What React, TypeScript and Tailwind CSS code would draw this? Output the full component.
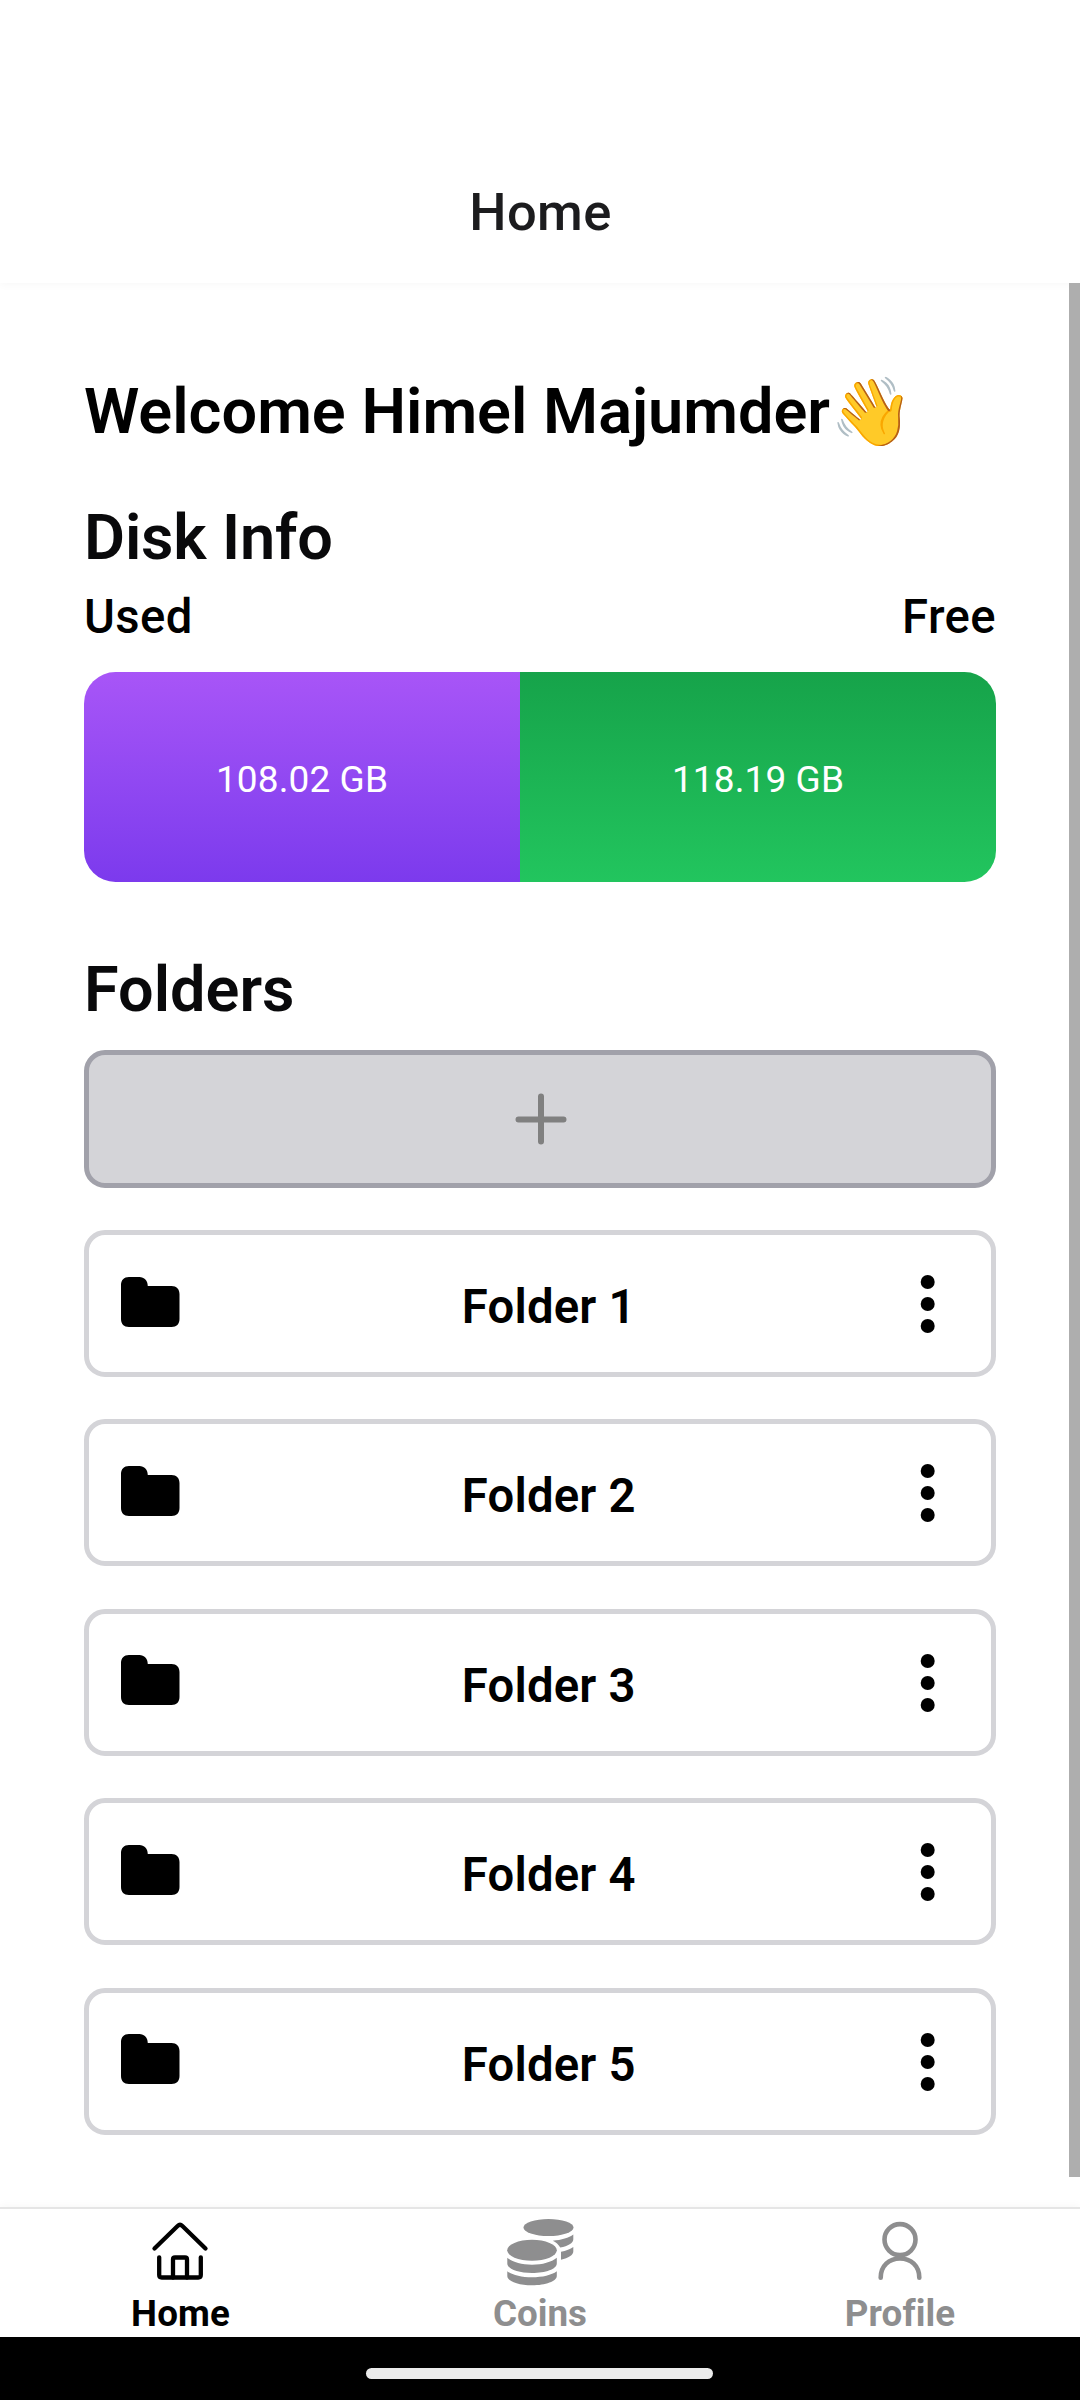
const folders = ["Folder 1", "Folder 2", "Folder 3", "Folder 4", "Folder 5"];

function FolderIcon() {
  return (
    <svg width="58.500" height="50" viewBox="0 0 59 50" preserveAspectRatio="none">
      <path d="M8 0H18.500C23.500 0 27 3.500 27 9H51C56 9 59 12 59 17V42C59 47 56 50 51 50H8C3 50 0 47 0 42V8C0 3 3 0 8 0Z" />
    </svg>
  );
}

function DotsIcon() {
  return (
    <svg width="16" height="60" viewBox="0 0 16 60">
      <circle cx="8.700" cy="8" r="7" />
      <circle cx="8.700" cy="30" r="7" />
      <circle cx="8.700" cy="52" r="7" />
    </svg>
  );
}

function HomeIcon() {
  return (
    <svg width="62" height="62" viewBox="0 0 62 62" fill="none" stroke="currentColor" strokeWidth="4.300" strokeLinecap="round" strokeLinejoin="round">
      <path d="M5.500 30.500L28.600 8Q31 5.700 33.400 8L56.500 30.500" />
      <path d="M10.200 39.300V57Q10.200 59.500 12.700 59.500H49.300Q51.800 59.500 51.800 57V39.300" />
      <path d="M24 59.500V41.500Q24 39.500 26 39.500H36Q38 39.500 38 41.500V59.500" />
    </svg>
  );
}

function CoinsIcon() {
  return (
    <svg width="67" height="67" viewBox="0 0 67 67" fill="currentColor">
      <ellipse cx="41.500" cy="8.600" rx="25" ry="8.500" />
      <path d="M66.300 15.500V20.200C66.300 24 61 27 53.300 28.600C51.500 25.300 49 23.200 45.800 21.700C54.500 21 62 18.800 66.300 15.500Z" />
      <path d="M66.300 28V32.500C66.300 36.200 61.500 39 54 40.700V32.800C59 31.800 63.500 30 66.300 28Z" />
      <ellipse cx="25" cy="31.300" rx="24.800" ry="10.500" />
      <path d="M.3 38.800C5.500 43.200 14.500 45.700 25 45.700S44.500 43.200 49.800 38.800V44.500C49.800 50 38.700 54 25 54S.3 50 .3 44.500Z" />
      <path d="M.3 52.300C5.500 56.200 14.500 58.300 25 58.300S44.500 56.200 49.800 52.300V57C49.800 62.200 38.700 66.300 25 66.300S.3 62.200 .3 57Z" />
    </svg>
  );
}

function ProfileIcon() {
  return (
    <svg width="50" height="64" viewBox="0 0 50 64" fill="none" stroke="currentColor" strokeWidth="4.600" strokeLinecap="round">
      <circle cx="25" cy="21.600" r="15.500" />
      <path d="M5.700 59.700C5.700 48 14 40.500 25 40.500S44.300 48 44.300 59.700" />
    </svg>
  );
}

export default function App() {
  return (
    <div className="flex h-[2400px] w-[1080px] flex-col overflow-hidden bg-white font-['Roboto',sans-serif] text-black">
      <header className="flex h-[283px] shrink-0 justify-center pt-[181px] pl-px text-[52.5px] leading-[62px] font-medium tracking-[0.4px] text-[#1c1c1e] shadow-[0_2px_8px_#00000008]">
        Home
      </header>

      <div className="flex h-[1894px] shrink-0">
        <main className="ml-[84px] flex w-[912px] flex-col">
          <h1 className="mt-[87px] h-[84px] whitespace-nowrap text-[63px] leading-[84px] font-semibold">
            Welcome Himel Majumder<span className="inline-block translate-y-[2px] text-[67px] leading-none">👋</span>
          </h1>
          <h2 className="mt-[42px] h-[84px] text-[63px] leading-[84px] font-semibold tracking-[-0.15px] text-[#09090b]">Disk Info</h2>
          <div className="flex h-[74px] justify-between text-[47.25px] leading-[74px] font-medium tracking-[0.4px]">
            <span>Used</span>
            <span>Free</span>
          </div>
          <section className="mt-[18px] flex h-[210px] overflow-hidden rounded-[31.5px] text-[37px] leading-[52px] tracking-[0.1px] text-white">
            <div className="flex w-[436px] items-center justify-center bg-linear-to-b from-[#a855f7] to-[#7c3aed] pt-[5px]">108.02 GB</div>
            <div className="flex flex-1 items-center justify-center bg-linear-to-b from-[#16a34a] to-[#22c55e] pt-[5px]">118.19 GB</div>
          </section>
          <h2 className="mt-[66px] h-[84px] text-[63px] leading-[84px] font-semibold text-[#09090b]">Folders</h2>
          <button className="mt-[18px] flex h-[138px] shrink-0 items-center justify-center rounded-[21px] border-[5px] border-[#a1a1aa] bg-[#d4d4d8] pl-px">
            <svg width="52" height="52" viewBox="0 0 52 52" stroke="#808080" strokeWidth="6" strokeLinecap="round">
              <path d="M26 3.500V48.500M3.500 26.400H48.500" />
            </svg>
          </button>
          <div className="mt-[42px] flex flex-col gap-[42.4px]">
            {folders.map((name) => (
              <div key={name} className="flex h-[147px] items-center justify-between rounded-[21px] border-[5px] border-[#d4d4d8] pr-[56px] pl-[32px]">
                <div className="-mt-[4px]"><FolderIcon /></div>
                <span className="pt-[7px] pr-px text-[47.25px] leading-[74px] font-semibold tracking-[0.2px]">{name}</span>
                <div className="pt-px"><DotsIcon /></div>
              </div>
            ))}
          </div>
        </main>
        <div className="relative ml-auto w-[11px] bg-[#aeaeae]" />
      </div>

      <nav className="mt-[30px] flex h-[130px] shrink-0 border-t-2 border-[#e5e5e5] text-[36.75px] leading-[44px] font-bold text-[#8e8e8f] shadow-[0_-2px_8px_#00000008]">
        <div className="flex flex-1 flex-col items-center pt-[9px] text-black">
          <HomeIcon />
          <span className="mt-[12px] pl-px tracking-[0.1px]">Home</span>
        </div>
        <div className="flex flex-1 flex-col items-center pt-[10px]">
          <CoinsIcon />
          <span className="mt-[6px]">Coins</span>
        </div>
        <div className="flex flex-1 flex-col items-center pt-[9px]">
          <ProfileIcon />
          <span className="mt-[10px] tracking-[0.1px]">Profile</span>
        </div>
      </nav>
      <footer className="flex flex-1 justify-center bg-black pt-[31px] pr-px">
        <div className="h-[11px] w-[347px] rounded-full bg-[#ebebeb]" />
      </footer>
    </div>
  );
}
